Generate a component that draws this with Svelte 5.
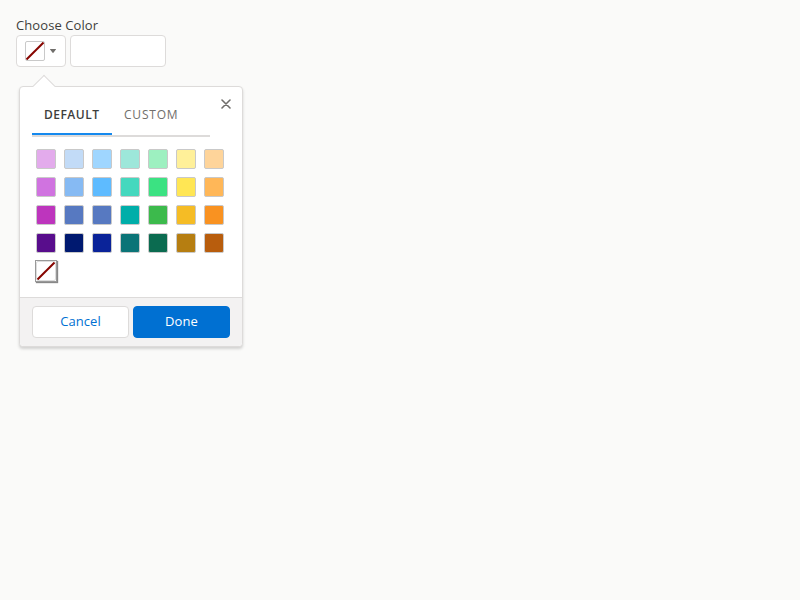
<script>
  const colors = [
    '#e3abec', '#c2dbf7', '#9fd6ff', '#9de7da', '#9df0c0', '#fff099', '#fed49a',
    '#d073e0', '#86baf3', '#5ebbff', '#44d8be', '#3be282', '#ffe654', '#ffb758',
    '#bd35bd', '#5779c1', '#5779c1', '#00aea9', '#3cba4c', '#f5bc25', '#f99221',
    '#580d8c', '#001970', '#0a2399', '#0b7477', '#0b6b50', '#b67e11', '#b85d0d'
  ];
  let selected = $state('');
  let tab = $state('Default');
</script>

{#snippet swatch(color)}
  <span class="swatch" style:background={color || '#fff'}>
    {#if !color}
      <svg viewBox="0 0 18 18" aria-hidden="true"><path d="M0.5 17.5 17.5 0.5" /></svg>
    {/if}
  </span>
{/snippet}

<main>
  <label for="hex">Choose Color</label>
  <div class="summary">
    <button class="trigger" aria-label="Choose Color">
      {@render swatch(selected)}
      <svg class="caret" viewBox="0 0 6 4" aria-hidden="true"><path d="M0.3 0h5.4q.5 0 .2.5L3.4 3.7q-.4.4-.8 0L.1.5Q-.2 0 .3 0z" /></svg>
    </button>
    <input id="hex" type="text" value={selected} />
  </div>

  <section class="popover">
    <button class="close" aria-label="Close">
      <svg viewBox="0 0 10 10"><path d="M1 1 9 9M9 1 1 9" /></svg>
    </button>
    <div class="body">
      <nav>
        {#each ['Default', 'Custom'] as name}
          <button class="tab" class:active={tab === name} onclick={() => (tab = name)}>{name}</button>
        {/each}
      </nav>
      <div class="swatches">
        {#each [...colors, ''] as color}
          <button class="cell" class:selected={color === '' && selected === ''} aria-label={color || 'none'} onclick={() => (selected = color)}>
            {@render swatch(color)}
          </button>
        {/each}
      </div>
    </div>
    <footer>
      <button class="action">Cancel</button>
      <button class="action brand">Done</button>
    </footer>
  </section>
</main>

<style>
  :global(body) {
    background: #fafaf9;
  }
  main, button, input {
    font-family: "Open Sans", "Noto Sans", sans-serif;
    font-size: 13px;
    letter-spacing: 0.09px;
    box-sizing: border-box;
  }
  main {
    padding: 16px;
    color: #3e3e3c;
  }
  button {
    margin: 0;
    padding: 0;
    border: 0;
    background: none;
  }
  label {
    display: block;
    height: 19px;
    line-height: 19px;
    font-size: 13px;
  }
  .summary {
    display: flex;
    gap: 4px;
  }
  .trigger, input {
    height: 32px;
    border: 1px solid #dddbda;
    border-radius: 4px;
    background: #fff;
  }
  .trigger {
    display: flex;
    align-items: center;
    width: 50px;
    padding-left: 8px;
    gap: 5px;
  }
  input {
    width: 96px;
    margin: 0;
  }
  .swatch {
    display: block;
    box-sizing: border-box;
    width: 20px;
    height: 20px;
    border: 1px solid #c9c9c9;
    border-radius: 2px;
  }
  .swatch svg {
    display: block;
    width: 18px;
    height: 18px;
    stroke: #870500;
    stroke-width: 2;
  }
  .caret {
    width: 6px;
    height: 4px;
    fill: #706e6b;
  }
  .popover {
    position: relative;
    box-sizing: border-box;
    width: 224px;
    margin: 19px 0 0 3px;
    border: 1px solid #dddbda;
    border-radius: 4px;
    background: #fff;
    box-shadow: 0 2px 3px rgba(0, 0, 0, 0.16);
  }
  .popover::before {
    content: "";
    position: absolute;
    left: 16px;
    top: -9px;
    width: 16px;
    height: 16px;
    box-sizing: border-box;
    border: 1px solid #dddbda;
    border-right: 0;
    border-bottom: 0;
    background: #fff;
    transform: rotate(45deg);
  }
  .close {
    position: absolute;
    left: 201px;
    top: 12px;
    width: 10px;
    height: 10px;
  }
  .close svg {
    display: block;
    width: 10px;
    height: 10px;
    stroke: #706e6b;
    stroke-width: 1.6;
    stroke-linecap: round;
  }
  .body {
    position: relative;
    height: 210px;
    box-sizing: border-box;
    padding: 8px 12px 0;
    pointer-events: none;
  }
  .body button {
    pointer-events: auto;
  }
  nav {
    display: flex;
    width: 178px;
    height: 42px;
    border-bottom: 2px solid #dddbda;
    box-sizing: border-box;
  }
  .tab {
    height: 40px;
    padding: 0 12px;
    font-size: 12px;
    line-height: 40px;
    letter-spacing: 0.8px;
    text-transform: uppercase;
    color: #706e6b;
    border-bottom: 2px solid transparent;
  }
  .tab.active {
    width: 80px;
    padding-right: 0;
    text-align: left;
    letter-spacing: 0.48px;
    font-weight: 600;
    color: #3e3e3c;
    border-bottom-color: #1589ee;
  }
  .swatches {
    display: grid;
    grid-template-columns: repeat(7, 20px);
    gap: 8px;
    padding: 12px 4px 0;
  }
  .cell {
    width: 20px;
    height: 20px;
  }
  .cell.selected {
    border-radius: 0;
    box-shadow: 0 0 0 1px #999, 1px 1px 1px 1px #888;
  }
  .selected .swatch {
    border-color: #ddd;
  }
  footer {
    display: flex;
    gap: 4px;
    box-sizing: border-box;
    height: 49px;
    padding: 8px 12px;
    border-top: 1px solid #dddbda;
    border-radius: 0 0 4px 4px;
    background: #f3f2f2;
  }
  .action {
    width: 97px;
    height: 32px;
    padding-bottom: 2px;
    border: 1px solid #dddbda;
    border-radius: 4px;
    background: #fff;
    color: #0070d2;
    line-height: 28px;
  }
  .brand {
    border-color: #0070d2;
    background: #0070d2;
    color: #fff;
  }
</style>
